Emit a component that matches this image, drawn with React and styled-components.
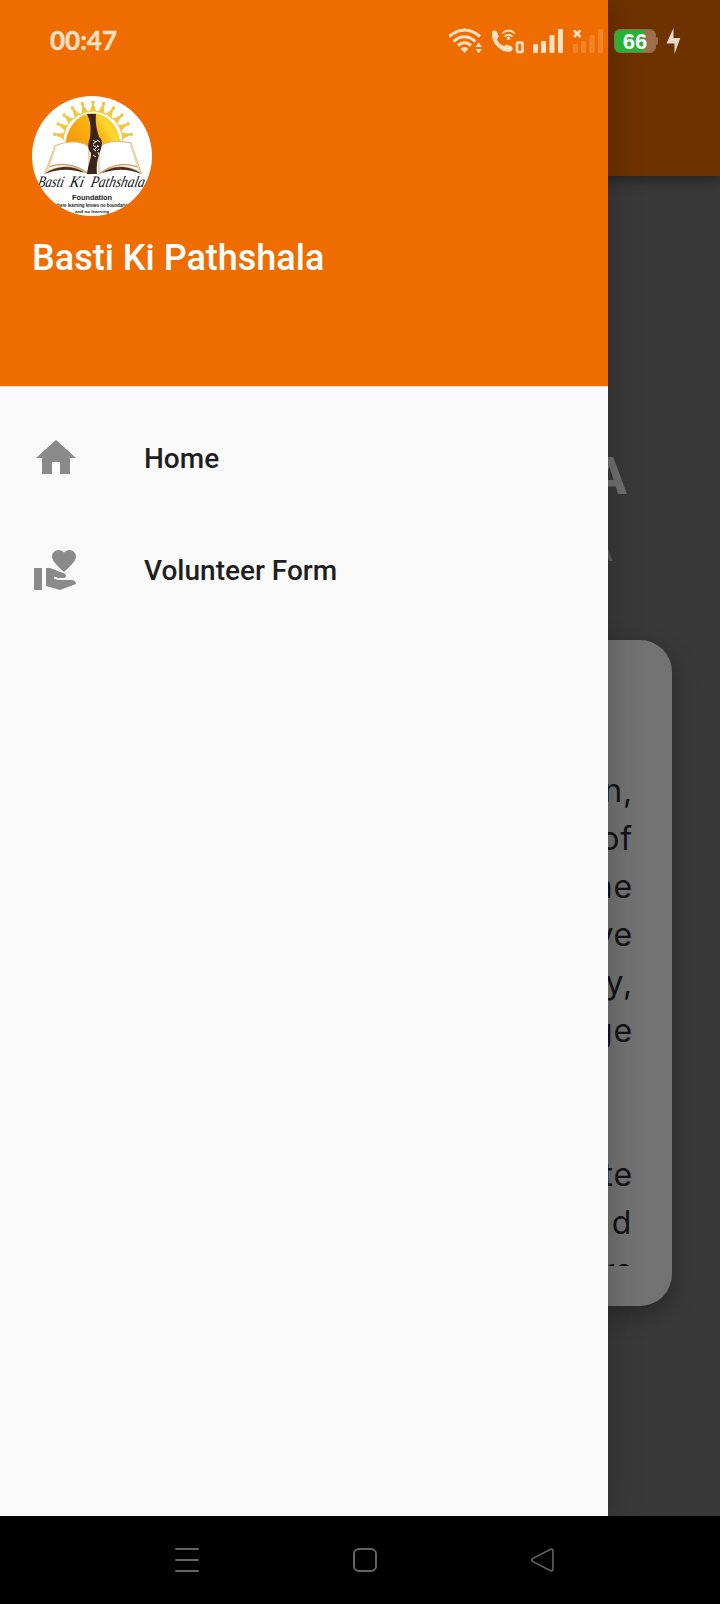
import React from "react";
import styled, { createGlobalStyle } from "styled-components";
import { MdHome, MdVolunteerActivism } from "react-icons/md";

const GlobalStyle = createGlobalStyle`
  *, *::before, *::after { box-sizing: border-box; }
  body { margin: 0; background: #000; }
`;

const Phone = styled.div`
  position: relative;
  display: flex;
  flex-direction: column;
  width: 720px;
  height: 1604px;
  overflow: hidden;
  font-family: Roboto, sans-serif;
`;

/* Page behind the drawer, already dimmed by the scrim */
const Page = styled.main`
  flex: 1;
  display: flex;
  flex-direction: column;
  min-height: 0;
  background: #393939;
`;

const AppBar = styled.header`
  height: 176px;
  flex: none;
  background: #6e3200;
  box-shadow: 0 4px 12px rgba(0, 0, 0, 0.4);
`;

const Headings = styled.div`
  display: flex;
  flex-direction: column;
  height: 464px;
  padding-top: 269px;
  text-align: right;
`;

const Heading = styled.div`
  height: ${(p) => p.$height}px;
  line-height: ${(p) => p.$height}px;
  padding-right: ${(p) => p.$inset}px;
  font-size: ${(p) => p.$size}px;
  font-weight: ${(p) => p.$weight};
  color: ${(p) => p.$color};
`;

const Card = styled.section`
  width: 624px;
  height: 666px;
  margin-left: 48px;
  padding: 40px 39px 40px 40px;
  border-radius: 32px;
  background: #727272;
  box-shadow: 0 8px 24px rgba(0, 0, 0, 0.32);
`;

const CardScroll = styled.div`
  height: 586px;
  padding-top: 87px;
  overflow: hidden;
`;

const Line = styled.p`
  margin: 0;
  height: 48px;
  line-height: 48px;
  font-family: Inter, sans-serif;
  font-size: 32px;
  letter-spacing: ${(p) => p.$spacing}px;
  text-align: right;
  color: #131313;
`;

const Drawer = styled.aside`
  position: absolute;
  top: 0;
  left: 0;
  width: 608px;
  height: 1516px;
  background: #fafafa;
  box-shadow: 0 0 32px rgba(0, 0, 0, 0.24);
`;

const DrawerHeader = styled.div`
  height: 387px;
  padding: 96px 32px 0;
  background: #ef6c00;
  border-bottom: 1px solid #f3dfcd;
`;

const Avatar = styled.svg`
  display: block;
  width: 120px;
  height: 120px;
  border-radius: 50%;
  background: #fff;
`;

const DrawerTitle = styled.h1`
  margin: 21px 0 0;
  line-height: 42px;
  font-size: 36px;
  font-weight: 500;
  color: #fff;
  white-space: nowrap;
`;

const Menu = styled.nav`
  padding-top: 15px;
`;

const MenuItem = styled.div`
  display: flex;
  align-items: center;
  gap: 64px;
  height: 112px;
  padding: 0 32px;
  font-size: 28px;
  font-weight: 500;
  color: #1f1f1f;

  svg {
    width: 48px;
    height: 48px;
    color: #8a8a8a;
  }
`;

const StatusBar = styled.div`
  position: absolute;
  top: 0;
  left: 0;
  display: flex;
  align-items: center;
  width: 720px;
  height: 82px;
  padding: 0 39px 0 50px;
  color: #fde0c6;
`;

const Clock = styled.span`
  flex: 1;
  padding-bottom: 2px;
  font-family: Lato, sans-serif;
  font-size: 26px;
  font-weight: 700;
  -webkit-text-stroke: 0.4px currentColor;
`;

const StatusIcon = styled.svg`
  display: block;
  flex: none;
  width: ${(p) => p.$w}px;
  height: 26px;
  margin-right: ${(p) => p.$after || 0}px;
`;

const Battery = styled.div`
  display: flex;
  align-items: center;
  margin-right: 8px;
`;

const BatteryBody = styled.div`
  width: 42px;
  height: 24px;
  border: 1px solid #8d7040;
  border-radius: 6px;
  background: linear-gradient(90deg, #27b135 29px, #9c6f4d 29px);
  color: #fff;
  font: 700 22px/24px "Liberation Sans", sans-serif;
  text-align: center;
`;

const BatteryTip = styled.div`
  width: 2px;
  height: 8px;
  border-radius: 0 2px 2px 0;
  background: #9c6f4d;
`;

const NavBar = styled.footer`
  display: flex;
  align-items: center;
  gap: 152px;
  height: 88px;
  flex: none;
  padding-left: 174px;
  background: #000;
`;

const NavIcon = styled.svg`
  width: 26px;
  height: 26px;
  fill: none;
  stroke: #656565;
  stroke-width: 2;
  stroke-linecap: round;
  stroke-linejoin: round;
`;

const LogoScript = styled.text`
  font-family: "Liberation Serif", serif;
  font-style: italic;
  font-size: ${(p) => p.$size || 14}px;
  fill: #111;
`;

const LogoCaption = styled.text`
  font-family: "Liberation Sans", sans-serif;
  font-weight: 700;
  font-size: ${(p) => p.$size}px;
  fill: #222;
`;

const rays = Array.from({ length: 11 }, (_, i) => -80 + i * 16);

function Logo() {
  return (
    <Avatar viewBox="0 0 120 120">
      <defs>
        <linearGradient id="sun" x1="0" y1="0.6" x2="1" y2="0.2">
          <stop offset="0" stopColor="#f5980c" />
          <stop offset="0.55" stopColor="#fbb813" />
          <stop offset="0.75" stopColor="#ffd934" />
          <stop offset="1" stopColor="#f8a710" />
        </linearGradient>
      </defs>
      {rays.map((a) => (
        <g key={a} transform={`translate(61 45) rotate(${a})`} fill="#f3c640">
          <path d="M-4.800-28.500-2.500-31.500-.8-38h1.600L2.500-31.500 4.800-28.500Q0-30.500-4.800-28.500z" />
          <circle cy="-38.800" r="1.800" />
        </g>
      ))}
      <path d="M33 53a28 36 0 0 1 56 0z" fill="url(#sun)" />
      <path d="M13 77 23 50c10-5 26-6 34 1v27c-12-9-30-10-44-1z" fill="#fff" stroke="#e0bb80" strokeWidth="1.200" />
      <path d="M109 77 99 47c-12-3-25-2-32 4v27c12-9 28-10 42-1z" fill="#fff" stroke="#e0bb80" strokeWidth="1.200" />
      <path d="M16 71c14-5 30-2 39 6M106 71c-14-5-28-2-37 6" fill="none" stroke="#c9a06a" strokeWidth="1.500" />
      <path d="M23 52 15 75M99 49l8 25" stroke="#edd6a8" strokeWidth="2" />
      <path d="M13 78c11-9 29-9 40-1-12-4-26-5-40 1zM109 78c-11-9-28-9-39-1 12-4 25-5 39 1z" fill="#4b2b1b" />
      <path d="M55 18h9c-1 9 1 16 3 23 4 3 3 8 2 12-3 8-5 15-4 25H55c1-9 4-14 4-21-4-5-3-10-1-15 1-9 1-16-3-24z" fill="#3a241b" />
      <path d="m61 44 3 2m1-2 3 2m-7 3 3 2m1-2 2 2m-6 2 3 2m1-10-4 3m5 2-4 4m3 1 2-2m-6 6 3 2m2-5 1 3" stroke="#efe7e0" strokeWidth="1" />
      <g transform="translate(0 91) skewX(-12) translate(0 -91)">
        <LogoScript $size={16} x="5" y="91" textLength="26" lengthAdjust="spacingAndGlyphs">
          Basti
        </LogoScript>
        <LogoScript $size={16} x="37" y="91" textLength="14" lengthAdjust="spacingAndGlyphs">
          Ki
        </LogoScript>
        <LogoScript $size={16} x="58" y="91" textLength="54" lengthAdjust="spacingAndGlyphs">
          Pathshala
        </LogoScript>
      </g>
      <LogoCaption $size={7} x="40" y="104" textLength="40" lengthAdjust="spacingAndGlyphs">
        Foundation
      </LogoCaption>
      <LogoCaption $size={4.6} x="22" y="110.500" textLength="76" lengthAdjust="spacingAndGlyphs">
        where learning knows no boundaries
      </LogoCaption>
      <LogoCaption $size={4} x="43" y="116.800" textLength="34" lengthAdjust="spacingAndGlyphs">
        and no learning
      </LogoCaption>
    </Avatar>
  );
}

function SignalBars({ after, off }) {
  return (
    <StatusIcon $w={31} $after={after} viewBox="0 0 31 26" fill="currentColor">
      <g opacity={off ? 0.2 : 1}>
        <rect x="0" y="16" width="5" height="9" rx="1" />
        <rect x="8" y="13" width="5" height="12" rx="1" />
        <rect x="16.500" y="7" width="5" height="18" rx="1" />
        <rect x="25" y="1" width="5" height="24" rx="1" />
      </g>
      {off && <path d="m1 2.500 6.500 6.500M7.500 2.500 1 9" stroke="currentColor" strokeWidth="2.600" />}
    </StatusIcon>
  );
}

function Status() {
  return (
    <StatusBar>
      <Clock>00:47</Clock>
      <StatusIcon $w={34} $after={9} viewBox="0 0 34 26" fill="none" stroke="currentColor" strokeWidth="3">
        <path d="M0 8.500Q15.500-4.500 31 8.500M4.500 13.500Q15.500 4 26.500 13.500M9 17.500Q15.500 12 22 17.500" />
        <path d="M11.500 20.500Q15.500 17.500 19.500 20.500L15.500 25z" fill="currentColor" stroke="none" />
        <path d="m26.500 19 3.200-4.500L33 19zM26.500 21h6.500l-3.300 4.200z" fill="currentColor" stroke="none" />
      </StatusIcon>
      <StatusIcon $w={33} $after={8} viewBox="0 0 33 26" fill="none" stroke="currentColor">
        <path d="M0 4C1 2 4 2 5 4l1.500 4c.4 1-1.500 2.700-1.500 3.500 1 3 4 5.700 7 6.500.9.100 2-1.700 3.200-1.400l4 1.700c2 1 1.800 3.500-.2 5C10 26.500-2 14 0 4z" fill="currentColor" stroke="none" />
        <path d="M10 5.500Q16.500-.5 23 5.500M12.500 8.500q4-3.500 8 0" strokeWidth="1.700" />
        <circle cx="16.500" cy="10.200" r="1.700" fill="currentColor" stroke="none" />
        <rect x="25" y="14.500" width="5.500" height="9.500" rx="1" strokeWidth="2.600" />
      </StatusIcon>
      <SignalBars after={9} />
      <SignalBars after={10} off />
      <Battery>
        <BatteryBody>66</BatteryBody>
        <BatteryTip />
      </Battery>
      <StatusIcon $w={15} viewBox="0 0 15 26" fill="#e5d8cf">
        <path d="M7.500 0v10h6.800L8.500 26V15.500H.5z" />
      </StatusIcon>
    </StatusBar>
  );
}

const cardLines = [
  { text: "n," },
  { text: "of" },
  { text: "he" },
  { text: "ve" },
  { text: "y," },
  { text: "ge" },
  { text: "" },
  { text: "" },
  { text: "te" },
  { text: "nd", spacing: 1.6 },
  { text: "rs" },
];

export default function App() {
  return (
    <Phone>
      <GlobalStyle />
      <Page>
        <AppBar />
        <Headings>
          <Heading $height={64} $size={52} $weight={800} $inset={93} $color="#707070">A</Heading>
          <Heading $height={80} $size={34} $weight={400} $inset={107} $color="#5f5f5f">A</Heading>
        </Headings>
        <Card>
          <CardScroll>
            {cardLines.map(({ text, spacing = 0.8 }, i) => (
              <Line key={i} $spacing={spacing}>{text}</Line>
            ))}
          </CardScroll>
        </Card>
      </Page>
      <NavBar>
        <NavIcon viewBox="0 0 26 26">
          <path d="M2 2h22M2 13h22M2 24h22" />
        </NavIcon>
        <NavIcon viewBox="0 0 26 26">
          <rect x="2" y="2" width="22" height="22" rx="5" />
        </NavIcon>
        <NavIcon viewBox="0 0 26 26">
          <path d="M2.500 11.600 20.500 2.200Q23 1.500 23 4v18q0 2.500-2.500 1.800L2.500 14.400Q1 13 2.500 11.600z" strokeWidth="1.600" />
        </NavIcon>
      </NavBar>
      <Drawer>
        <DrawerHeader>
          <Logo />
          <DrawerTitle>Basti Ki Pathshala</DrawerTitle>
        </DrawerHeader>
        <Menu>
          <MenuItem>
            <MdHome />
            Home
          </MenuItem>
          <MenuItem>
            <MdVolunteerActivism />
            Volunteer Form
          </MenuItem>
        </Menu>
      </Drawer>
      <Status />
    </Phone>
  );
}
